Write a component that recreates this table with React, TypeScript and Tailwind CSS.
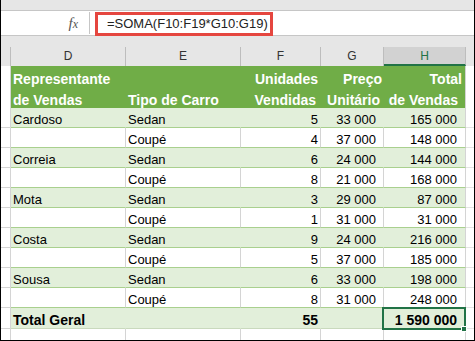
const rows = [
  { rep: "Cardoso", tipo: "Sedan", qtd: "5", preco: "33 000", total: "165 000" },
  { rep: "", tipo: "Coupé", qtd: "4", preco: "37 000", total: "148 000" },
  { rep: "Correia", tipo: "Sedan", qtd: "6", preco: "24 000", total: "144 000" },
  { rep: "", tipo: "Coupé", qtd: "8", preco: "21 000", total: "168 000" },
  { rep: "Mota", tipo: "Sedan", qtd: "3", preco: "29 000", total: "87 000" },
  { rep: "", tipo: "Coupé", qtd: "1", preco: "31 000", total: "31 000" },
  { rep: "Costa", tipo: "Sedan", qtd: "9", preco: "24 000", total: "216 000" },
  { rep: "", tipo: "Coupé", qtd: "5", preco: "37 000", total: "185 000" },
  { rep: "Sousa", tipo: "Sedan", qtd: "6", preco: "33 000", total: "198 000" },
  { rep: "", tipo: "Coupé", qtd: "8", preco: "31 000", total: "248 000" },
];

const cell = "flex h-full items-end overflow-visible whitespace-nowrap leading-[15px]";

function DataRow({ r, band }: { r: (typeof rows)[number]; band: boolean }) {
  const fill = band ? "bg-[#e2efda] border-r-[#e2efda]" : "bg-white border-r-[#d4d4d4]";
  return (
    <div className="flex h-[20px]">
      <div className="w-[10px] border-r border-b border-[#d4d4d4]" />
      <div className={`w-[115px] border-r border-b border-b-[#a9d08e] pl-[2px] ${fill} ${cell}`}>{r.rep}</div>
      <div className={`w-[115px] border-r border-b border-b-[#a9d08e] pl-[2px] ${fill} ${cell}`}>{r.tipo}</div>
      <div className={`w-[80px] justify-end border-r border-b border-b-[#a9d08e] pr-[2px] ${fill} ${cell}`}>{r.qtd}</div>
      <div className={`w-[63px] justify-end border-r border-b border-b-[#a9d08e] pr-[7px] ${fill} ${cell}`}>{r.preco}</div>
      <div className={`w-[82px] justify-end border-r border-b border-r-[#d4d4d4] border-b-[#a9d08e] pr-[8px] ${band ? "bg-[#e2efda]" : "bg-white"} ${cell}`}>{r.total}</div>
      <div className="flex-1 border-b border-[#e4e4e4]" />
    </div>
  );
}

export default function App() {
  const letters = [
    { l: "D", w: "w-[115px]" },
    { l: "E", w: "w-[115px]" },
    { l: "F", w: "w-[80px]" },
    { l: "G", w: "w-[63px]" },
  ];
  return (
    <div className="h-[341px] w-[475px] overflow-hidden border-x border-b border-black bg-white text-[13px] text-black" style={{ fontFamily: '"Liberation Sans", Arial, sans-serif' }}>
      {/* formula bar */}
      <div className="h-[10px] bg-[#e6e6e6]" />
      <div className="relative flex h-[26px] items-stretch border-y border-[#c6c6c6] bg-white">
        <div className="flex w-[88px] items-center justify-end pr-[11px]">
          <span className="text-[15px] italic text-[#555]" style={{ fontFamily: '"Liberation Serif", serif' }}>
            f<span className="text-[12px]">x</span>
          </span>
        </div>
        <div className="my-[1px] w-px bg-[#c6c6c6]" />
        <div className="ml-[5px] mt-[1px] h-[24px] w-[178px] border-[3px] border-[#e5463f] pl-[9px] text-[13px] leading-[18px] text-[#222]">
          =SOMA(F10:F19*G10:G19)
        </div>
      </div>

      {/* column headers */}
      <div className="h-[11px] bg-[#e6e6e6]" />
      <div className="flex h-[19px] bg-[#e6e6e6] text-[12px] leading-[19px] text-[#333]">
        <div className="w-[10px] border-r border-[#bdbdbd]" />
        {letters.map((c) => (
          <div key={c.l} className={`${c.w} border-r border-[#bdbdbd] text-center`}>{c.l}</div>
        ))}
        <div className="w-[82px] border-r border-b-2 border-r-[#bdbdbd] border-b-[#217346] bg-[#d2d2d2] text-center leading-[18px] text-[#217346]">H</div>
        <div className="flex-1" />
      </div>

      {/* table header */}
      <div className="flex h-[42px] text-[14px] font-bold leading-[21px] text-white">
        <div className="w-[10px] border-r border-[#d4d4d4]" />
        <div className="w-[115px] whitespace-nowrap bg-[#70ad47] pl-[2px] pt-[3px]">
          Representante<br />de Vendas
        </div>
        <div className="w-[115px] whitespace-nowrap bg-[#70ad47] pl-[2px] pt-[24px]">Tipo de Carro</div>
        <div className="w-[80px] whitespace-nowrap bg-[#70ad47] pr-[3px] pt-[3px] text-right">
          Unidades<br /><span className="pr-[2px]">Vendidas</span>
        </div>
        <div className="w-[63px] whitespace-nowrap bg-[#70ad47] pr-[2px] pt-[3px] text-right">
          Preço<br /><span className="pr-[2px]">Unitário</span>
        </div>
        <div className="w-[82px] whitespace-nowrap border-r border-[#d4d4d4] bg-[#70ad47] pr-[3px] pt-[3px] text-right">
          Total<br /><span className="pr-[4px]">de Vendas</span>
        </div>
        <div className="flex-1" />
      </div>

      {rows.map((r, i) => (
        <DataRow key={i} r={r} band={i % 2 === 0} />
      ))}

      {/* total row */}
      <div className="flex h-[21px] text-[14px] font-bold">
        <div className="w-[10px] border-r border-b border-[#d4d4d4]" />
        <div className={`w-[115px] border-r border-b border-r-[#e2efda] border-b-[#c9d9bd] bg-[#e2efda] pl-[2px] ${cell}`}>Total Geral</div>
        <div className={`w-[115px] border-r border-b border-r-[#e2efda] border-b-[#c9d9bd] bg-[#e2efda] ${cell}`} />
        <div className={`w-[80px] justify-end border-r border-b border-r-[#e2efda] border-b-[#c9d9bd] bg-[#e2efda] pr-[2px] ${cell}`}>55</div>
        <div className={`w-[63px] border-r border-b border-r-[#e2efda] border-b-[#c9d9bd] bg-[#e2efda] ${cell}`} />
        <div className={`relative w-[82px] justify-end border-r border-b border-r-[#d4d4d4] border-b-[#c9d9bd] bg-[#e2efda] pr-[8px] ${cell}`}>
          1 590 000
          <div className="absolute -left-[2px] -top-[1px] h-[23px] w-[84px] border-2 border-[#217346]" />
          <div className="absolute left-[77px] top-[18px] h-[6px] w-[6px] border border-white bg-[#217346]" />
        </div>
        <div className="flex-1 border-b border-[#e4e4e4]" />
      </div>

      {/* empty row */}
      <div className="flex h-[20px]">
        <div className="w-[10px] border-r border-[#d4d4d4]" />
        <div className="w-[115px] border-r border-[#d4d4d4]" />
        <div className="w-[115px] border-r border-[#d4d4d4]" />
        <div className="w-[80px] border-r border-[#d4d4d4]" />
        <div className="w-[63px] border-r border-[#d4d4d4]" />
        <div className="w-[82px] border-r border-[#d4d4d4]" />
        <div className="flex-1" />
      </div>
    </div>
  );
}
